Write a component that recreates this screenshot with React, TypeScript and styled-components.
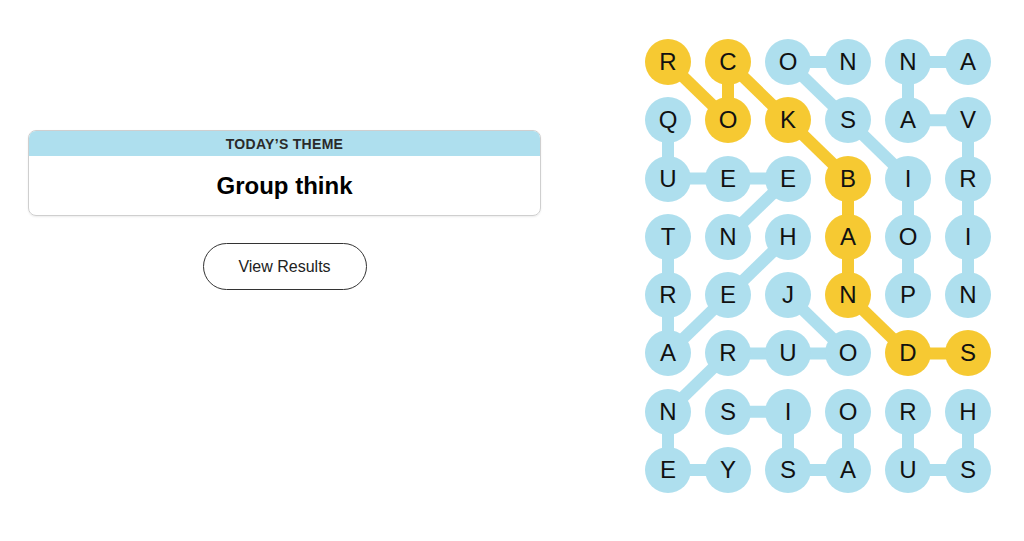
import React from 'react';
import styled, { createGlobalStyle } from 'styled-components';

const GlobalStyle = createGlobalStyle`
  html, body {
    margin: 0;
    padding: 0;
    background: #ffffff;
  }
  body {
    font-family: 'Liberation Sans', Arial, sans-serif;
    color: #000;
  }
`;

const BLUE = '#aedfee';
const YELLOW = '#f6c932';
const CELL = 46;
const COL_STEP = 60;
const ROW_STEP = 58.3;

const LETTERS = [
  'RCONNA',
  'QOKSAV',
  'UEEBIR',
  'TNHAOI',
  'REJNPN',
  'ARUODS',
  'NSIORH',
  'EYSAUS',
];

type Cell = [number, number];

// found words, as paths of [row, col]
const WORDS: { path: Cell[]; spangram?: boolean }[] = [
  {
    path: [[0, 0], [1, 1], [0, 1], [1, 2], [2, 3], [3, 3], [4, 3], [5, 4], [5, 5]],
    spangram: true,
  },
  { path: [[1, 0], [2, 0], [2, 1], [2, 2], [3, 1]] },
  { path: [[3, 2], [4, 1], [5, 0], [4, 0], [3, 0]] },
  { path: [[4, 2], [5, 3], [5, 2], [5, 1], [6, 0], [7, 0], [7, 1]] },
  { path: [[6, 3], [7, 3], [7, 2], [6, 2], [6, 1]] },
  { path: [[6, 4], [7, 4], [7, 5], [6, 5]] },
  { path: [[4, 5], [3, 5], [2, 5], [1, 5], [1, 4], [0, 4], [0, 5]] },
  { path: [[4, 4], [3, 4], [2, 4], [1, 3], [0, 2], [0, 3]] },
];

const spangramCells = new Set(
  WORDS.filter((w) => w.spangram).flatMap((w) => w.path.map(([r, c]) => `${r}-${c}`))
);

const Page = styled.div`
  display: flex;
  align-items: flex-start;
  width: 1024px;
  height: 541px;
  box-sizing: border-box;
  padding: 39px 0 0 28px;
`;

const LeftPanel = styled.div`
  width: 513px;
  display: flex;
  flex-direction: column;
  align-items: center;
  padding-top: 91px;
`;

const ThemeCard = styled.div`
  width: 100%;
  box-sizing: border-box;
  border: 1px solid #cfcfcf;
  border-radius: 8px;
  overflow: hidden;
  box-shadow: 0 1px 2px rgba(0, 0, 0, 0.08);
`;

const ThemeHeader = styled.div`
  background: ${BLUE};
  height: 25px;
  line-height: 26px;
  text-align: center;
  font-size: 14px;
  font-weight: 700;
  letter-spacing: 0.3px;
  color: #2a2a2a;
`;

const ThemeBody = styled.div`
  height: 59px;
  display: flex;
  align-items: center;
  justify-content: center;
  font-size: 24px;
  font-weight: 700;
  color: #000;
`;

const ResultsButton = styled.button`
  margin-top: 27px;
  width: 164px;
  height: 47px;
  border: 1px solid #333;
  border-radius: 24px;
  background: #fff;
  font-family: 'Liberation Sans', Arial, sans-serif;
  font-size: 16px;
  color: #222;
  cursor: pointer;
`;

const Board = styled.div`
  position: relative;
  margin-left: 104px;
`;

const Links = styled.svg`
  position: absolute;
  left: 0;
  top: 0;
  pointer-events: none;
`;

const Grid = styled.div`
  position: relative;
  display: grid;
  grid-template-columns: repeat(6, ${CELL}px);
  grid-auto-rows: ${CELL}px;
  column-gap: ${COL_STEP - CELL}px;
  row-gap: ${ROW_STEP - CELL}px;
`;

const Letter = styled.button<{ $found: 'spangram' | 'word' }>`
  width: ${CELL}px;
  height: ${CELL}px;
  border: none;
  border-radius: 50%;
  padding: 0;
  background: ${(p) => (p.$found === 'spangram' ? YELLOW : BLUE)};
  font-family: 'Liberation Sans', Arial, sans-serif;
  font-size: 24px;
  color: #111;
  display: flex;
  align-items: center;
  justify-content: center;
`;

const center = ([r, c]: Cell) => ({ x: c * COL_STEP + CELL / 2, y: r * ROW_STEP + CELL / 2 });

export default function App() {
  const width = 5 * COL_STEP + CELL;
  const height = 7 * ROW_STEP + CELL;
  return (
    <>
      <GlobalStyle />
      <Page>
        <LeftPanel>
          <ThemeCard>
            <ThemeHeader>TODAY’S THEME</ThemeHeader>
            <ThemeBody>Group think</ThemeBody>
          </ThemeCard>
          <ResultsButton>View Results</ResultsButton>
        </LeftPanel>
        <Board>
          <Links width={width} height={height} viewBox={`0 0 ${width} ${height}`}>
            {WORDS.map((w, i) =>
              w.path.slice(1).map((cell, j) => {
                const a = center(w.path[j]);
                const b = center(cell);
                return (
                  <line
                    key={`${i}-${j}`}
                    x1={a.x}
                    y1={a.y}
                    x2={b.x}
                    y2={b.y}
                    stroke={w.spangram ? YELLOW : BLUE}
                    strokeWidth={12}
                  />
                );
              })
            )}
          </Links>
          <Grid>
            {LETTERS.map((row, r) =>
              row.split('').map((ch, c) => (
                <Letter key={`${r}-${c}`} $found={spangramCells.has(`${r}-${c}`) ? 'spangram' : 'word'}>
                  {ch}
                </Letter>
              ))
            )}
          </Grid>
        </Board>
      </Page>
    </>
  );
}
